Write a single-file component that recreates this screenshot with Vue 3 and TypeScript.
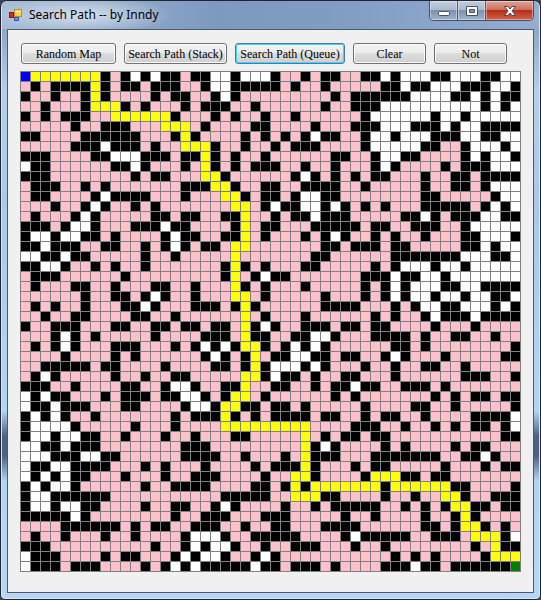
<script setup lang="ts">
import { computed, ref } from 'vue'

// Legend: # wall, . visited, o open, Y path, B start, G goal
const legend: Record<string, string> = {
  '#': '#000000',
  '.': '#ffc0cb',
  o: '#ffffff',
  Y: '#ffff00',
  B: '#0000ff',
  G: '#008000',
}

const rows: string[] = [
  'BYYYYYYY#.#o#o##.##oo#ooo' + '#..#.##..##o#ooo##ooo##oo',
  '.#.####Y#.##.###..#oo####' + '#.#..#.....##o##ooo###oo#',
  '#..#..#Y#....#.##..#o#...' + '......#.######oooo##o#o##',
  '..#...#YYY#.#...#.###..#.' + '.....#..###oooooooooo#o#o',
  '#.#.###..YYYYYY#...#.#..#' + '..#......#oooooo#oo#ooooo',
  '.....#..###...YYY.#....##' + '....#...###ooo###o#oo####',
  '##....######...#Y#....#.#' + '.#.#o##..#oo#ooo###oo##oo',
  '.....###o###.#..YYY#..#..' + '#.###....#ooooo##..#ooo#o',
  '###....##ooo###.##Y#.#..#' + '......##..#oo##....#o#oo#',
  'o##......##o#...#.Y#.#.##' + '#..#..#...#o#....#.###ooo',
  '###........#.##...YY#....' + '..#o#.#.#.##...#..##.####',
  '.###..#.#.......###YY#..#' + '#..####..#.....#..##.#ooo',
  '.##....#o####...#...YY#.#' + '#.#oo##........##.....#oo',
  '...#..#o#..#.#.......YY.#' + 'o##oo#o#.#.#...#####.#o#o',
  '.#...#o#.....##.##..##Y..' + '#.##o###.....##o#.###oo##',
  '###.#oo#...###o##....#Y.#' + '#...#####.##..###..#ooooo',
  '#oo#oo##.#....#o##..##Y.#' + '...#.#o#..#.#..#...##ooo#',
  '##o###..##..#.#o#.##.YY..' + '.....##.###.##.....##o#oo',
  'oo##o##.....#..#.....Y...' + '....##......#######ooo##o',
  '##oo#..#.#..#.......#Y#.#' + '...##.....#.#ooo#oo#ooooo',
  '.###......#.........#Y.#o' + '##.......###o##oo#ooooooo',
  '.#...##..#...##..#...Y#.#' + '...#.....#.#o#ooo##oo####',
  '......#..##.#o#..#...YY.#' + '.....#...#.#o#oo#oo#oo##o',
  '.#.#..#...##o#...###.#Y#.' + '.....####...#.#oo##ooo#o#',
  '..#..##....##..#......Y.#' + '...#......#.#..#o###o####',
  '#..###...##..##.##.##.Y#o' + '#..###.##.##....#...#....',
  '...#o#.#.....#....###.Y##' + '..##oo#...####.#..##..#..',
  '.#.#o#...###...#.#o#o#YY#' + '.#o#o#......##.#........#',
  '....#....#.#......#o#.#Y.' + '##oo##.##..#o#...#.....##',
  '..#####.##....#....##.#Y#' + 'ooo#o#...#..#..##..#.....',
  '.#o#.....#..#..##.....YY#' + 'o##.#..##...#......###..#',
  '###..#....##..#oo#..##Y..' + '##..#.##o##..###.#.......',
  'o#o##...#.###.##oo#.#YY.#' + '......#.#.......#.#.##.##',
  'o##o###...##....#oo#YY##.' + '##.#.....#....##..#.....#',
  '#o#o#..#.......#.###Y#.#.' + '####.##..#.##..#....####o',
  '#oooo#.....#...#....YYYYY' + 'YYYY....###..#..#.#.##.#o',
  '#oo#oo##..#...#..#...##..' + '...Y.#.##.##...........##',
  'oo##o###........###......' + '...Y#o#....#.#....#.##...',
  'ooo###oo##......####..#..' + '.#.Y###...#######..##o#..',
  'o##oo####...#.#...#....#.' + '###Y#...#.##.....#...#.##',
  'o#o#o##...#...#..###....#' + '..YY#....#YYY##.##.......',
  '#o#oo#......#..####....##' + '.#Y#YYYYYYY#YYYYYY##....#',
  '#oo######...........#####' + '..YYY##....#..#..YY#..###',
  '#oo#oo##....#..##..#o#...' + '.#..#.#####..#.#.#YY##.##',
  '#####o#........#..###...#' + '##.....#..#....#..#Y#....',
  '....######.#.##..###..#..' + '##...####......##.#YY#.#.',
  '.#..#...#..#....#ooo#..##' + '###....#o#####..###.YYY#o',
  '###..........#..#o#oo#..#' + '..###...#..#........#.Y##',
  'o###....#.##...#o#oo#..#o' + '#...........#.#.#....#YYY',
  'o###.###....#.#o#o#####o#' + '#.###.#....###o##.######G',
]

interface Cell {
  key: number
  x: number
  y: number
  fill: string
}

const cells = computed<Cell[]>(() =>
  rows.flatMap((row, r) =>
    [...row].map((ch, c) => ({
      key: r * 50 + c,
      x: c * 10 + 1,
      y: r * 10 + 1,
      fill: legend[ch],
    })),
  ),
)

const actions = [
  { label: 'Random Map', size: 'medium' },
  { label: 'Search Path (Stack)', size: 'wide' },
  { label: 'Search Path (Queue)', size: 'widest' },
  { label: 'Clear', size: 'small' },
  { label: 'Not', size: 'small' },
]
const active = ref('Search Path (Queue)')
</script>

<template>
  <main class="window">
    <header class="titlebar">
      <svg class="app-icon" viewBox="0 0 14 14" aria-hidden="true">
        <rect x="5.5" y="1.5" width="7" height="7" fill="#ffcf3f" stroke="#c08a1c" />
        <path d="M6.500 2.500h5v2h-5z" fill="#ffe894" />
        <rect x="0.500" y="4.500" width="4" height="5" fill="#d62b1f" stroke="#8e1710" />
        <rect x="5.500" y="9.500" width="4" height="3" fill="#5b93ee" stroke="#2c5fb8" />
      </svg>
      <h1 class="title">Search Path -- by Inndy</h1>
      <div class="controls">
        <button class="control" type="button" aria-label="Minimize">
          <svg viewBox="0 0 14 12"><rect x="1.500" y="6.500" width="11" height="4" rx="1" fill="#fff" stroke="#4a5468" /></svg>
        </button>
        <button class="control" type="button" aria-label="Maximize">
          <svg viewBox="0 0 14 12">
            <path d="M1.500 1.500h11v9h-11zM4.500 4.500v3h5v-3z" fill="#fff" fill-rule="evenodd" stroke="#4a5468" />
          </svg>
        </button>
        <button class="control close" type="button" aria-label="Close">
          <svg viewBox="0 0 14 12">
            <path d="M1.500 1.500h3.500l2 2.500 2-2.500h3.500l-3.500 4.500 3.500 4.500h-3.500l-2-2.500-2 2.500h-3.500l3.500-4.500z" fill="#fff" stroke="#5a4650" />
          </svg>
        </button>
      </div>
    </header>

    <section class="client">
      <div class="toolbar">
        <button
          v-for="action in actions"
          :key="action.label"
          type="button"
          class="action"
          :class="[action.size, { active: action.label === active }]"
          @click="active = action.label"
        >
          {{ action.label }}
        </button>
      </div>
      <svg class="map" viewBox="0 0 501 501" shape-rendering="crispEdges" role="img" aria-label="Map">
        <rect width="501" height="501" fill="#808080" />
        <rect v-for="cell in cells" :key="cell.key" :x="cell.x" :y="cell.y" width="9" height="9" :fill="cell.fill" />
      </svg>
    </section>
  </main>
</template>

<style>
body {
  background: #3a4658;
}
</style>

<style scoped>
.window {
  box-sizing: border-box;
  min-height: 100vh;
  display: flex;
  flex-direction: column;
  padding: 0 6px 6px;
  border: 1px solid #20262f;
  border-radius: 7px 7px 5px 5px;
  background:
    linear-gradient(to bottom, transparent 30px, #b4cfec 90px, #a9c8ea 200px, #b2d4f5 410px, #4c6285 435px, #4c6285 455px, #b2d4f5 480px, #b7d6f6 100%);
  background-color: #8fa9c9;
  box-shadow: inset 0 0 0 1px #d5e5f5;
}

.titlebar {
  display: flex;
  align-items: flex-start;
  height: 28px;
  margin: 0 -5px;
  padding-left: 7px;
  background:
    radial-gradient(ellipse 90px 18px at 82px 14px, rgba(255, 255, 255, 0.6), rgba(255, 255, 255, 0)),
    linear-gradient(to right, #a9bdd8, #7c99bf 40%, #7f9cc1 60%, #94add0);
  border-radius: 6px 6px 0 0;
}

.app-icon {
  width: 14px;
  height: 14px;
  margin-top: 7px;
}

.title {
  flex: 1;
  margin: 0;
  padding: 5px 0 0 6px;
  font: 400 12px/18px "Noto Sans", sans-serif;
  color: #000;
}

.controls {
  display: flex;
  margin-right: 5px;
  border: 1px solid #434f63;
  border-top: 0;
  border-radius: 0 0 5px 5px;
  overflow: hidden;
}

.control {
  display: flex;
  align-items: center;
  justify-content: center;
  width: 28px;
  height: 19px;
  padding: 0;
  border: 0;
  border-right: 1px solid #4d5a70;
  background: linear-gradient(#c2cede, #aab9cf 48%, #7d90ad 50%, #9fb3cf);
  box-shadow: inset 0 0 0 1px rgba(255, 255, 255, 0.4);
}

.control svg {
  width: 14px;
  height: 12px;
}

.control.close {
  width: 47px;
  border-right: 0;
  background: linear-gradient(#e0a397, #cf6c58 48%, #b5301a 50%, #d2624a);
}

.client {
  flex: 1;
  padding: 13px 12px 20px;
  border: 1px solid #4c596b;
  background: #f0f0f0;
}

.toolbar {
  display: flex;
  flex-wrap: wrap;
  gap: 8px;
  margin: 0 0 7px 1px;
}

.action {
  box-sizing: border-box;
  height: 21px;
  padding: 0;
  border: 1px solid #707070;
  border-radius: 3px;
  background: linear-gradient(#f3f3f3, #ebebeb 50%, #dddddd 50%, #cfcfcf);
  box-shadow: inset 0 0 0 1px #fafafa;
  font: 400 12px/18px "Liberation Serif", serif;
  color: #000;
  white-space: nowrap;
}

.action.active {
  border-color: #3c7fb1;
  box-shadow: inset 0 0 0 1px #48d0f8;
}

.small {
  width: 73px;
}

.medium {
  width: 95px;
}

.wide {
  width: 103px;
}

.widest {
  width: 110px;
}

.map {
  display: block;
  width: 100%;
}
</style>
